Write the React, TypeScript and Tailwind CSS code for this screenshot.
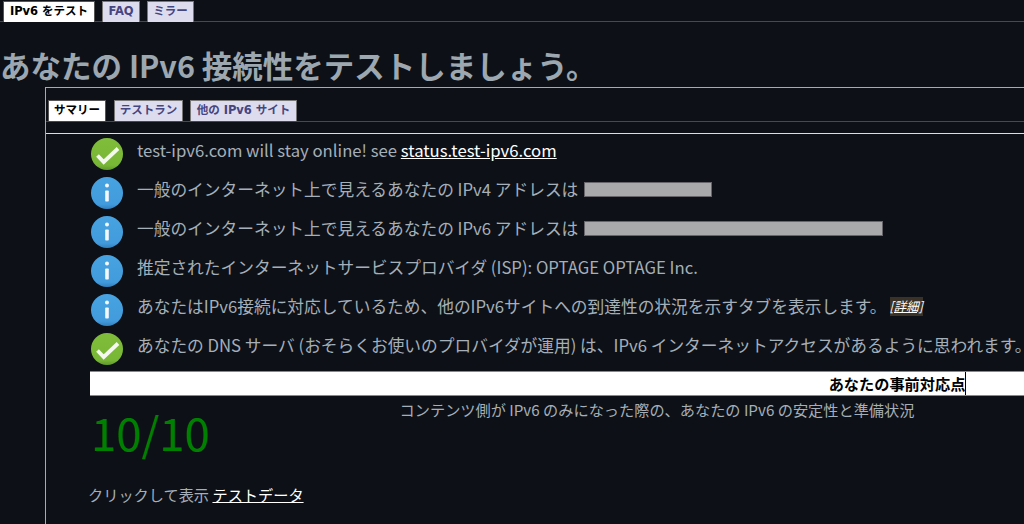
import React from "react";

const sans = "font-['Noto_Sans_CJK_JP','Noto_Sans',sans-serif]";

function OkIcon() {
  return (
    <svg width="34" height="34" viewBox="0 0 34 34" className="shrink-0">
      <defs>
        <linearGradient id="g" x1="0" y1="0" x2="0" y2="1">
          <stop offset="0" stopColor="#80bd3a" />
          <stop offset="0.85" stopColor="#78b636" />
          <stop offset="1" stopColor="#5f9a2c" />
        </linearGradient>
      </defs>
      <circle cx="17" cy="17" r="16" fill="url(#g)" />
      <path d="M7.5 18.5 L13.7 25 L28 11.5" fill="none" stroke="#f4f8ee" strokeWidth="3.8" />
    </svg>
  );
}

function InfoIcon() {
  return (
    <svg width="34" height="34" viewBox="0 0 34 34" className="shrink-0">
      <defs>
        <linearGradient id="b" x1="0" y1="0" x2="0" y2="1">
          <stop offset="0" stopColor="#48a3e2" />
          <stop offset="0.85" stopColor="#419bdc" />
          <stop offset="1" stopColor="#3480bd" />
        </linearGradient>
      </defs>
      <circle cx="17" cy="17" r="16" fill="url(#b)" />
      <circle cx="17" cy="9.5" r="2" fill="#f4f8fc" />
      <rect x="15.2" y="14.5" width="3.6" height="11" rx="0.8" fill="#f4f8fc" />
    </svg>
  );
}

function Row({ icon, children }: { icon: "ok" | "info"; children: React.ReactNode }) {
  return (
    <div className="flex h-[39px] items-center gap-[13px] whitespace-nowrap">
      {icon === "ok" ? <OkIcon /> : <InfoIcon />}
      <div className="flex items-center pb-[6px]">{children}</div>
    </div>
  );
}

function Tab({ active, children, w }: { active?: boolean; children: React.ReactNode; w: string }) {
  return (
    <div
      className={
        "flex h-[21px] items-center justify-center border-b-0 text-[11.5px] font-bold font-['DejaVu_Sans','Noto_Sans_CJK_JP',sans-serif] " +
        w +
        (active
          ? " bg-white text-black border border-[#555]"
          : " bg-[#dddcee] text-[#45457f] border border-[#777]")
      }
    >
      {children}
    </div>
  );
}

export default function App() {
  return (
    <div className={"h-[524px] w-[1024px] overflow-hidden bg-[#0d1117] text-[16.72px] text-[#a5afb9] " + sans}>
      <div className="flex h-[22px] gap-[7px] border-b border-[#444a50] pl-[3px] pt-px">
        <Tab active w="w-[92px]">IPv6 をテスト</Tab>
        <Tab w="w-[38px]">FAQ</Tab>
        <Tab w="w-[47px]">ミラー</Tab>
      </div>
      <h1 className="mb-px mt-[23px] h-[41px] whitespace-nowrap text-[30.5px] font-bold leading-[41px] text-[#9da7b0]">
        あなたの IPv6 接続性をテストしましょう。
      </h1>
      <div className="ml-[45px] h-[437px] border-l border-t border-[#aaa]">
        <div className="flex h-[34px] items-end border-b border-[#444a50] pl-[2px]">
          <Tab active w="w-[58px]">サマリー</Tab>
          <Tab w="w-[69px] ml-[8px]">テストラン</Tab>
          <Tab w="w-[107px] ml-[7px]">他の IPv6 サイト</Tab>
        </div>
        <div className="mt-[11px] border-t border-[#ddd] pl-[44px]">
          <Row icon="ok">
            <span>test-ipv6.com will stay online! see&nbsp;</span>
            <span className="text-white underline">status.test-ipv6.com</span>
          </Row>
          <Row icon="info">
            <span>一般のインターネット上で見えるあなたの IPv4 アドレスは&nbsp;</span>
            <span className="ml-[2px] h-[15px] w-[128px] border border-[#66666a] bg-[#a9a9ac]" />
          </Row>
          <Row icon="info">
            <span>一般のインターネット上で見えるあなたの IPv6 アドレスは&nbsp;</span>
            <span className="ml-[2px] h-[15px] w-[299px] border border-[#66666a] bg-[#a9a9ac]" />
          </Row>
          <Row icon="info">
            <span>推定されたインターネットサービスプロバイダ (ISP): OPTAGE OPTAGE Inc.</span>
          </Row>
          <Row icon="info">
            <span>あなたはIPv6接続に対応しているため、他のIPv6サイトへの到達性の状況を示すタブを表示します。</span>
            <span className="ml-[3px] bg-[#3a3226] text-[12.5px] italic text-white underline">[詳細]</span>
          </Row>
          <Row icon="ok">
            <span>あなたの DNS サーバ (おそらくお使いのプロバイダが運用) は、IPv6 インターネットアクセスがあるように思われます。</span>
          </Row>
          <div className="mt-[3px] flex h-[25px] w-[1615px] items-center justify-center border-y border-y-[#888] bg-white text-[15.2px] font-bold text-black">
            <span className="border-r border-black leading-[23px]">あなたの事前対応点</span>
          </div>
          <div className="flex w-[1014px] items-start">
            <div className="mt-[5px] w-[120px] pl-px text-[45.5px] leading-[60px] text-[#008000]">10/10</div>
            <div className="w-[894px] text-center text-[15.2px] leading-[26px]">
              コンテンツ側が IPv6 のみになった際の、あなたの IPv6 の安定性と準備状況
            </div>
          </div>
          <div className="-ml-[2px] mt-[22px] text-[15.2px]">
            クリックして表示 <span className="text-white underline">テストデータ</span>
          </div>
        </div>
      </div>
    </div>
  );
}
